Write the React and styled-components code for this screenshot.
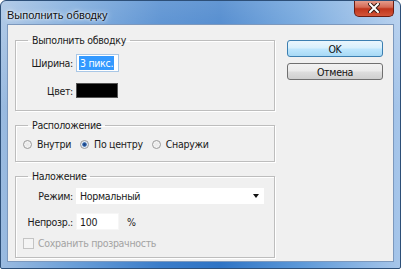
import React from 'react'
import styled, { createGlobalStyle } from 'styled-components'

const Global = createGlobalStyle`
  html, body { margin: 0; padding: 0; background: #fff; }
  body {
    font-family: "DejaVu Sans Condensed", "DejaVu Sans", sans-serif;
    font-stretch: condensed;
    font-size: 10.5px;
    letter-spacing: -0.3px;
    color: #1a1a1a;
  }
`

const Window = styled.div`
  width: 401px;
  height: 269px;
  box-sizing: border-box;
  border: 1px solid #2d4f78;
  border-radius: 6px 6px 2px 2px;
  background:
    linear-gradient(180deg, rgba(255,255,255,0.25) 0%, rgba(255,255,255,0) 40%),
    linear-gradient(90deg, #9bbbe0 0%, #6b9fd8 18%, #3a7cc9 40%, #2f74c5 55%, #5c98d8 75%, #a7c6ea 100%);
  display: flex;
  flex-direction: column;
  overflow: hidden;
`

const TitleBar = styled.div`
  height: 23px;
  display: flex;
  align-items: flex-start;
  justify-content: space-between;
  padding-left: 6px;
  padding-right: 6px;
`

const Title = styled.div`
  font-family: "Liberation Sans", Arial, sans-serif;
  font-size: 11px;
  letter-spacing: 0;
  line-height: 14px;
  margin-top: 7px;
  color: #111;
  text-shadow: 0 0 6px rgba(255,255,255,0.9), 0 0 3px rgba(255,255,255,0.9);
`

const CloseButton = styled.div`
  width: 40px;
  height: 17px;
  margin-top: -1px;
  box-sizing: border-box;
  border: 1px solid #6b1c12;
  border-top: none;
  border-radius: 0 0 5px 5px;
  background: linear-gradient(180deg, #e8a393 0%, #d56a55 45%, #c0351c 55%, #d2553a 100%);
  display: flex;
  align-items: center;
  justify-content: center;
`

const Client = styled.div`
  flex: 1;
  margin: 0 6px 6px 6px;
  border: 1px solid #7c98bd;
  background: #f0f0f0;
  display: flex;
  gap: 12px;
  padding: 8px 0 0 7px;
`

const Column = styled.div`
  width: 260px;
  display: flex;
  flex-direction: column;
  gap: 7px;
`

const Group = styled.fieldset`
  margin: 0;
  padding: 0;
  border: 1px solid #bdbdbd;
  box-shadow: inset 1px 1px 0 #fff, 1px 1px 0 #fff;
  height: ${p => p.$h}px;
  box-sizing: border-box;
`

const Legend = styled.legend`
  margin-left: 12px;
  padding: 0 4px;
  line-height: 14px;
  color: #1a1a1a;
`

const Form = styled.div`
  display: grid;
  grid-template-columns: 57px auto;
  column-gap: 3px;
  align-items: center;
  row-gap: ${p => p.$gap}px;
  margin-top: ${p => p.$top}px;
`

const Label = styled.div`
  text-align: right;
  white-space: nowrap;
`

const Field = styled.div`
  display: flex;
  align-items: center;
  gap: 8px;
`

const TextBox = styled.div`
  width: ${p => p.$w}px;
  height: ${p => p.$h}px;
  box-sizing: border-box;
  background: #fff;
  border: 1px solid ${p => (p.$focus ? '#a9c7e6' : '#f6f6f6')};
  display: flex;
  align-items: center;
  padding-left: ${p => (p.$focus ? 2 : 3)}px;
  white-space: nowrap;
`

const Selected = styled.span`
  background: #3399ff;
  color: #fff;
  line-height: 14px;
  padding: 0 1px;
`

const Swatch = styled.div`
  width: 42px;
  height: 15px;
  background: #000;
  border: 1px solid #555;
  box-sizing: border-box;
`

const Select = styled.div`
  width: 188px;
  height: 16px;
  box-sizing: border-box;
  background: #fff;
  display: flex;
  align-items: center;
  justify-content: space-between;
  padding: 0 5px 0 4px;
`

const Arrow = styled.div`
  width: 0;
  height: 0;
  border-left: 3px solid transparent;
  border-right: 3px solid transparent;
  border-top: 4px solid #111;
`

const RadioRow = styled.div`
  display: flex;
  align-items: center;
  margin: 6px 0 0 7px;
  gap: 9px;
`

const Option = styled.label`
  display: flex;
  align-items: center;
  gap: 5px;
`

const Radio = styled.span`
  width: 9px;
  height: 9px;
  border-radius: 50%;
  box-sizing: border-box;
  border: 1px solid #9a9a9a;
  background: radial-gradient(circle, ${p => (p.$on ? '#1b3f7a 0, #2a5fa8 1.8px, #dfe9f5 2.6px' : '#e8e8e8 0')}, #f8f8f8 100%);
`

const CheckRow = styled.div`
  display: flex;
  align-items: center;
  gap: 4px;
  margin: 7px 0 0 7px;
  color: #a3a3a3;
`

const Check = styled.span`
  width: 11px;
  height: 11px;
  box-sizing: border-box;
  border: 1px solid #c4c4c4;
  background: #f4f4f4;
`

const Buttons = styled.div`
  display: flex;
  flex-direction: column;
  gap: 6px;
  padding-top: 7px;
`

const Button = styled.div`
  width: 96px;
  height: 17px;
  box-sizing: border-box;
  border-radius: 3px;
  border: 1px solid ${p => (p.$primary ? '#3c7fb1' : '#707070')};
  background: ${p =>
    p.$primary
      ? 'linear-gradient(180deg, #eaf6fd 0%, #d9f0fc 45%, #bee6fd 55%, #a7d9f5 100%)'
      : 'linear-gradient(180deg, #f2f2f2 0%, #ebebeb 45%, #dddddd 55%, #cfcfcf 100%)'};
  display: flex;
  align-items: center;
  justify-content: center;
  line-height: 14px;
  color: #111;
`

const CloseIcon = () => (
  <svg width="12" height="10" viewBox="0 0 12 10">
    <path d="M2 1 L10 9 M10 1 L2 9" stroke="#3a1a14" strokeWidth="4" strokeLinecap="square" />
    <path d="M2 1 L10 9 M10 1 L2 9" stroke="#fff" strokeWidth="2" strokeLinecap="square" />
  </svg>
)

export default function App() {
  return (
    <>
      <Global />
      <Window>
        <TitleBar>
          <Title>Выполнить обводку</Title>
          <CloseButton>
            <CloseIcon />
          </CloseButton>
        </TitleBar>
        <Client>
          <Column>
            <Group $h={78}>
              <Legend>Выполнить обводку</Legend>
              <Form $gap={11} $top={7}>
                <Label>Ширина:</Label>
                <TextBox $w={43} $h={18} $focus>
                  <Selected>3 пикс.</Selected>
                </TextBox>
                <Label>Цвет:</Label>
                <Swatch />
              </Form>
            </Group>
            <Group $h={44}>
              <Legend>Расположение</Legend>
              <RadioRow>
                <Option><Radio />Внутри</Option>
                <Option><Radio $on />По центру</Option>
                <Option><Radio />Снаружи</Option>
              </RadioRow>
            </Group>
            <Group $h={89}>
              <Legend>Наложение</Legend>
              <Form $gap={9} $top={5}>
                <Label>Режим:</Label>
                <Select>
                  <span>Нормальный</span>
                  <Arrow />
                </Select>
                <Label>Непрозр.:</Label>
                <Field>
                  <TextBox $w={43} $h={17}>100</TextBox>
                  <span>%</span>
                </Field>
              </Form>
              <CheckRow>
                <Check />
                Сохранить прозрачность
              </CheckRow>
            </Group>
          </Column>
          <Buttons>
            <Button $primary>OK</Button>
            <Button>Отмена</Button>
          </Buttons>
        </Client>
      </Window>
    </>
  )
}
